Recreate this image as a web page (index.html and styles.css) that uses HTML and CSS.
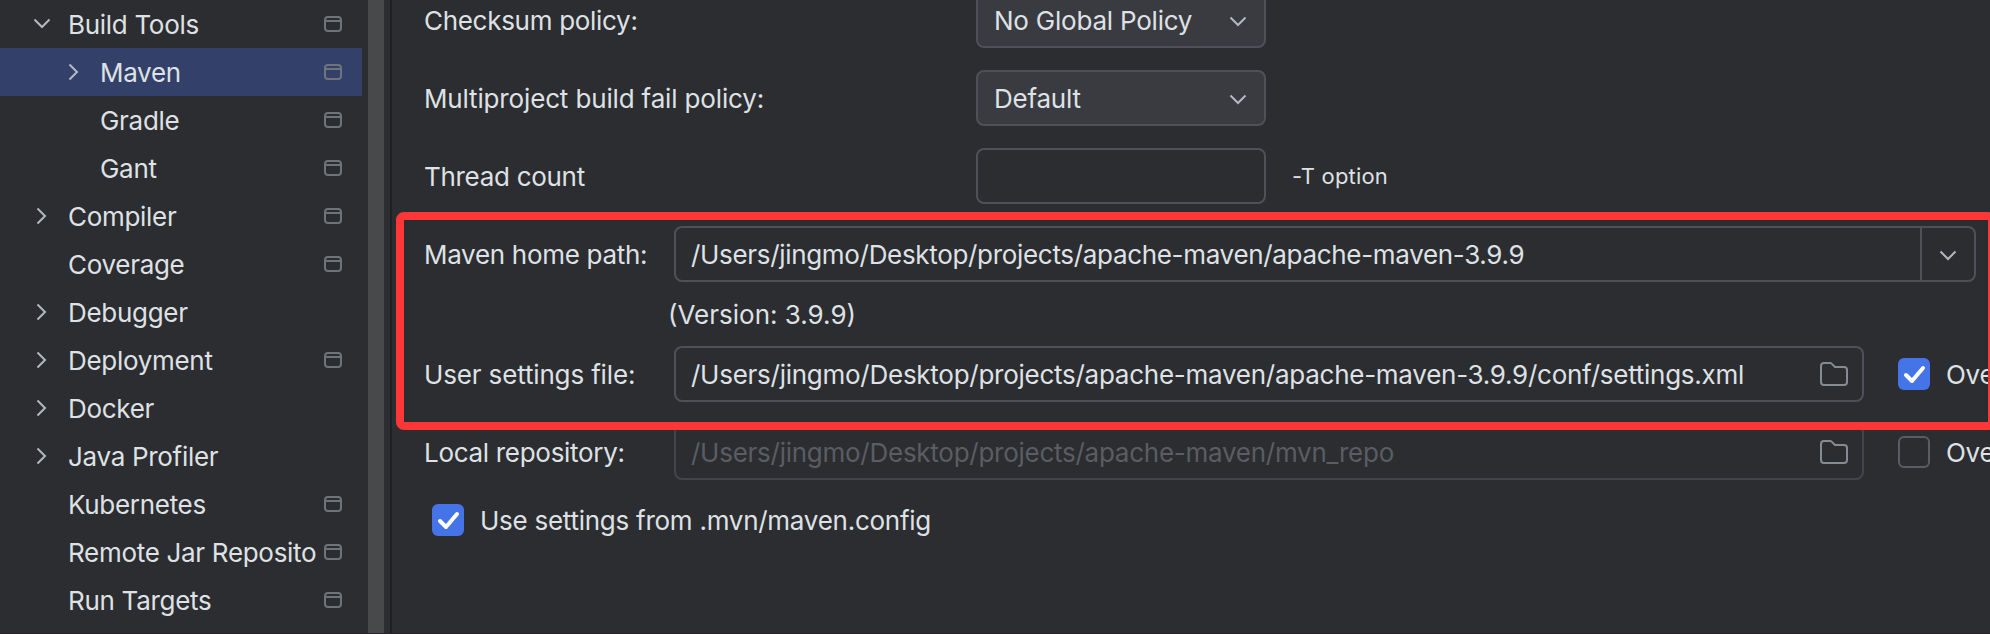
FILE: index.html
```html
<!DOCTYPE html>
<html lang="en">
<head>
<meta charset="utf-8">
<title>Settings – Maven</title>
<link rel="stylesheet" href="styles.css">
</head>
<body>
<svg class="defs" width="0" height="0">
  <symbol id="down" viewBox="0 0 18 12"><path d="M1.500 1.500l7.500 7.500 7.500-7.500"/></symbol>
  <symbol id="right" viewBox="0 0 12 18"><path d="M1.500 1.500l7.500 7.500-7.500 7.500"/></symbol>
  <symbol id="project" viewBox="0 0 18 16"><rect x="1" y="1" width="16" height="14" rx="3"/><path d="M1 5h16"/></symbol>
  <symbol id="folder" viewBox="0 0 28 24"><path d="M1 4a3 3 0 0 1 3-3h6.200a2 2 0 0 1 1.400.6L15 5h9a3 3 0 0 1 3 3v12a3 3 0 0 1-3 3H4a3 3 0 0 1-3-3z"/></symbol>
  <symbol id="check" viewBox="0 0 32 32"><path d="M8 17l6 6L25 10"/></symbol>
</svg>
<div class="settings">
  <nav class="sidebar">
    <div class="item"><span class="arrow"><svg class="down"><use href="#down"/></svg></span><span class="name">Build Tools</span><svg class="project"><use href="#project"/></svg></div>
    <div class="item nested selected"><span class="arrow"><svg class="right"><use href="#right"/></svg></span><span class="name">Maven</span><svg class="project"><use href="#project"/></svg></div>
    <div class="item nested"><span class="arrow"></span><span class="name">Gradle</span><svg class="project"><use href="#project"/></svg></div>
    <div class="item nested"><span class="arrow"></span><span class="name">Gant</span><svg class="project"><use href="#project"/></svg></div>
    <div class="item"><span class="arrow"><svg class="right"><use href="#right"/></svg></span><span class="name">Compiler</span><svg class="project"><use href="#project"/></svg></div>
    <div class="item"><span class="arrow"></span><span class="name">Coverage</span><svg class="project"><use href="#project"/></svg></div>
    <div class="item"><span class="arrow"><svg class="right"><use href="#right"/></svg></span><span class="name">Debugger</span></div>
    <div class="item"><span class="arrow"><svg class="right"><use href="#right"/></svg></span><span class="name">Deployment</span><svg class="project"><use href="#project"/></svg></div>
    <div class="item"><span class="arrow"><svg class="right"><use href="#right"/></svg></span><span class="name">Docker</span></div>
    <div class="item"><span class="arrow"><svg class="right"><use href="#right"/></svg></span><span class="name">Java Profiler</span></div>
    <div class="item"><span class="arrow"></span><span class="name">Kubernetes</span><svg class="project"><use href="#project"/></svg></div>
    <div class="item"><span class="arrow"></span><span class="name">Remote Jar Repositories</span><svg class="project"><use href="#project"/></svg></div>
    <div class="item"><span class="arrow"></span><span class="name">Run Targets</span><svg class="project"><use href="#project"/></svg></div>
  </nav>
  <div class="scrollbar"></div>
  <main class="panel">
    <div class="row wide first"><label>Checksum policy:</label><div class="field combo"><span class="text">No Global Policy</span><svg class="down"><use href="#down"/></svg></div></div>
    <div class="row wide"><label class="loose">Multiproject build fail policy:</label><div class="field combo"><span class="text">Default</span><svg class="down"><use href="#down"/></svg></div></div>
    <div class="row wide"><label>Thread count</label><div class="field short"></div><span class="hint">-T option</span></div>
    <div class="row"><label>Maven home path:</label><div class="field home"><span class="path">/Users/jingmo/Desktop/projects/apache-maven/apache-maven-3.9.9</span><span class="drop"><svg class="down"><use href="#down"/></svg></span></div></div>
    <div class="version">(Version: 3.9.9)</div>
    <div class="row user"><label class="loose">User settings file:</label><div class="field file"><span class="path">/Users/jingmo/Desktop/projects/apache-maven/apache-maven-3.9.9/conf/settings.xml</span><svg class="folder"><use href="#folder"/></svg></div><span class="box on"><svg><use href="#check"/></svg></span><span class="override">Override</span></div>
    <div class="row"><label>Local repository:</label><div class="field file disabled"><span class="path">/Users/jingmo/Desktop/projects/apache-maven/mvn_repo</span><svg class="folder"><use href="#folder"/></svg></div><span class="box"></span><span class="override">Override</span></div>
    <div class="config"><span class="box on"><svg><use href="#check"/></svg></span><span class="text">Use settings from .mvn/maven.config</span></div>
    <div class="highlight"></div>
  </main>
</div>
</body>
</html>
```

FILE: styles.css
```css
* { box-sizing: border-box; }
body {
  margin: 0;
  background: #2b2d30;
  color: #dfe1e5;
  font: 400 26px/32px Inter, sans-serif;
  letter-spacing: -0.3px;
  overflow: hidden;
}
.defs { position: absolute; }
svg { display: block; flex: none; fill: none; stroke-width: 2; }
.settings {
  display: flex;
  width: 1990px;
  height: 634px;
  border-bottom: 1px solid #252429;
  overflow: hidden;
}

.sidebar { width: 362px; flex: none; }
.item {
  display: flex;
  align-items: center;
  height: 48px;
  padding: 0 20px 0 32px;
}
.item.nested { padding-left: 64px; }
.selected { background: #33416a; }
.arrow { display: flex; width: 36px; flex: none; }
.name {
  flex: 1;
  min-width: 0;
  margin-right: 8px;
  padding-top: 2px;
  overflow: hidden;
  white-space: nowrap;
}
.down { width: 18px; height: 12px; stroke: #b4b8bf; }
.right { width: 12px; height: 18px; margin-left: 4px; stroke: #b4b8bf; }
.arrow .down { margin-left: 1px; }
.combo .down, .drop .down { margin-top: 4px; }
.project { width: 18px; height: 16px; stroke: #6f737a; }

.scrollbar {
  width: 16px;
  margin: 0 6px;
  flex: none;
  background: #48494b;
}

.panel {
  position: relative;
  flex: 1;
  min-width: 0;
  padding-left: 32px;
  border-left: 2px solid #1e1f22;
  white-space: nowrap;
}
.row {
  display: flex;
  align-items: center;
  height: 56px;
  margin-bottom: 22px;
}
.row.first { margin-top: -8px; }
.row label { width: 250px; flex: none; }
.row.wide label { width: 552px; }
.row .loose { letter-spacing: -0.15px; }
.row label, .text, .path, .override { padding-top: 2px; }
.field {
  display: flex;
  align-items: center;
  flex: none;
  height: 56px;
  padding-left: 16px;
  border: 2px solid #4e5157;
  border-radius: 8px;
}
.combo, .short { width: 290px; }
.combo {
  justify-content: space-between;
  padding-right: 17px;
  background: #393b40;
  letter-spacing: -0.22px;
}
.hint { margin-left: 26px; font-size: 22px; letter-spacing: 0.2px; }
.home { width: 1302px; }
.path { flex: 1; margin-left: -1px; letter-spacing: -0.32px; }
.drop {
  display: flex;
  align-items: center;
  justify-content: center;
  width: 54px;
  height: 52px;
  border-left: 2px solid #4e5157;
}
.file { width: 1190px; padding-right: 14px; }
.file .path { letter-spacing: -0.26px; }
.folder { width: 28px; height: 24px; stroke: #868a91; }
.disabled { border-color: #43454a; }
.disabled .path { color: #5a5d63; }
.version { height: 32px; margin: -5px 0 15px 244px; letter-spacing: 0; }
.box {
  width: 32px;
  height: 32px;
  flex: none;
  border: 2px solid #5a5d63;
  border-radius: 6px;
}
.box.on { border: 0; background: #4573e8; }
.box svg { width: 32px; height: 32px; stroke: #fff; stroke-width: 4; stroke-linecap: round; stroke-linejoin: round; }
.file + .box { margin: 0 16px 0 34px; }
.config { display: flex; align-items: center; gap: 16px; padding: 1px 0 0 8px; }
.config .text { letter-spacing: -0.26px; }

/* frame around the Maven home and user settings rows, running off the right edge */
.highlight {
  position: absolute;
  top: 212px;
  left: 4px;
  width: 1600px;
  height: 218px;
  border: 8px solid #fd3737;
  border-radius: 8px;
}
```
